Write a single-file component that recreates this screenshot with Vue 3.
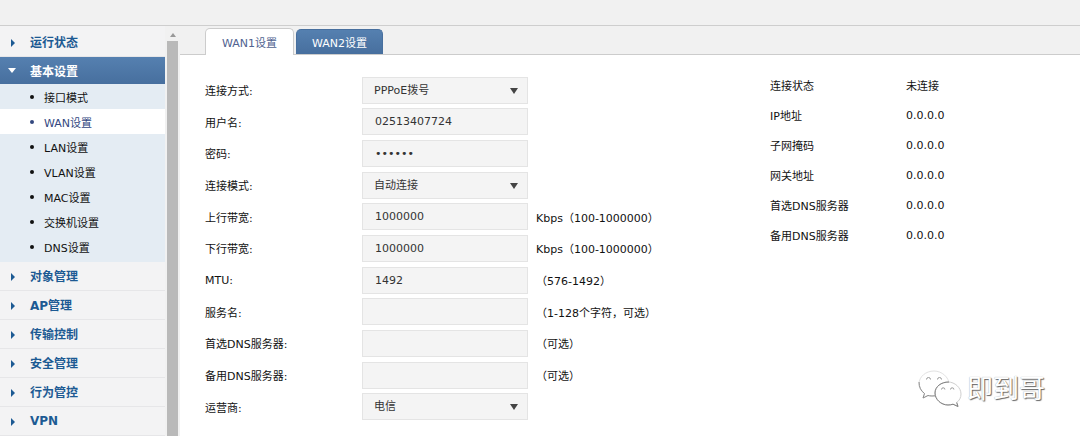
<script setup>
import { ref, reactive } from 'vue'

const menuTop = [{ label: '运行状态' }]
const subItems = ['接口模式', 'WAN设置', 'LAN设置', 'VLAN设置', 'MAC设置', '交换机设置', 'DNS设置']
const menuBottom = ['对象管理', 'AP管理', '传输控制', '安全管理', '行为管控', 'VPN']
const activeSub = ref('WAN设置')

const tabs = ['WAN1设置', 'WAN2设置']
const activeTab = ref('WAN1设置')

const fields = reactive([
  { id: 'conn-type', label: '连接方式:', kind: 'select', value: 'PPPoE拨号', options: ['PPPoE拨号', '静态地址', '动态地址'] },
  { id: 'username', label: '用户名:', kind: 'text', value: '02513407724' },
  { id: 'password', label: '密码:', kind: 'password', value: '123456' },
  { id: 'conn-mode', label: '连接模式:', kind: 'select', value: '自动连接', options: ['自动连接', '手动连接'] },
  { id: 'uplink', label: '上行带宽:', kind: 'text', value: '1000000', hint: 'Kbps（100-1000000）' },
  { id: 'downlink', label: '下行带宽:', kind: 'text', value: '1000000', hint: 'Kbps（100-1000000）' },
  { id: 'mtu', label: 'MTU:', kind: 'text', value: '1492', hint: '（576-1492）' },
  { id: 'service', label: '服务名:', kind: 'text', value: '', hint: '（1-128个字符，可选）' },
  { id: 'dns1', label: '首选DNS服务器:', kind: 'text', value: '', hint: '（可选）' },
  { id: 'dns2', label: '备用DNS服务器:', kind: 'text', value: '', hint: '（可选）' },
  { id: 'isp', label: '运营商:', kind: 'select', value: '电信', options: ['电信', '联通', '移动'] }
])

const status = [
  ['连接状态', '未连接'],
  ['IP地址', '0.0.0.0'],
  ['子网掩码', '0.0.0.0'],
  ['网关地址', '0.0.0.0'],
  ['首选DNS服务器', '0.0.0.0'],
  ['备用DNS服务器', '0.0.0.0']
]
</script>

<template>
  <div class="page">
    <header class="topbar"></header>
    <div class="body">
      <nav class="sidebar">
        <a v-for="m in menuTop" :key="m.label" href="#" class="group">
          <span class="caret"></span>{{ m.label }}
        </a>
        <a href="#" class="group open"><span class="caret down"></span>基本设置</a>
        <ul class="sub">
          <li v-for="s in subItems" :key="s">
            <a href="#" :class="{ current: s === activeSub }" @click.prevent="activeSub = s">
              <span class="dot"></span>{{ s }}
            </a>
          </li>
        </ul>
        <a v-for="m in menuBottom" :key="m" href="#" class="group"><span class="caret"></span>{{ m }}</a>
      </nav>
      <div class="scroll">
        <span class="scroll-up"></span>
        <span class="thumb"></span>
      </div>
      <main class="main">
        <div class="tabs" role="tablist">
          <button
            v-for="t in tabs"
            :key="t"
            type="button"
            role="tab"
            class="tab"
            :class="{ active: t === activeTab }"
            :aria-selected="t === activeTab"
            @click="activeTab = t"
          >{{ t }}</button>
        </div>
        <div class="content">
          <form class="form" @submit.prevent>
            <div v-for="f in fields" :key="f.id" class="row">
              <label :for="f.id">{{ f.label }}</label>
              <div v-if="f.kind === 'select'" class="select">
                <select :id="f.id" v-model="f.value">
                  <option v-for="o in f.options" :key="o">{{ o }}</option>
                </select>
              </div>
              <input v-else :id="f.id" v-model="f.value" :type="f.kind" autocomplete="off" />
              <span v-if="f.hint" class="hint">{{ f.hint }}</span>
            </div>
          </form>
          <dl class="status">
            <template v-for="s in status" :key="s[0]">
              <dt>{{ s[0] }}</dt>
              <dd>{{ s[1] }}</dd>
            </template>
          </dl>
        </div>
      </main>
    </div>
    <div class="watermark">
      <svg width="44" height="38" viewBox="0 0 44 38" aria-hidden="true">
        <g fill="#fff" stroke-linejoin="round">
          <path d="M16 1C8 1 1 6.500 1 14c0 4 2 7 5.500 9.500L5 28l5-2.500c2 .5 4 .7 6 .6C25 26 31 20.500 31 14S24 1 16 1z" stroke="#e2e2e2" />
          <path d="M1 12c0 5 2 9 5.500 11.500L5 28l5-2.500c2 .5 4 .6 7 .3" fill="none" stroke="#8c8c8c" />
          <path d="M30 12c-7 0-13 4.700-13 11S23 35 30 35c2 0 3.500-.3 5-.8l5 2.300-1.300-4C41.500 30.500 43 27.500 43 24c0-6.200-6-12-13-12z" stroke="#cfcfcf" />
          <path d="M31 12c-8 0-14 4.700-14 11S23 35 30 35c2 0 3.500-.3 5-.8l5 2.300-1.300-4" fill="none" stroke="#808080" />
        </g>
        <g fill="none" stroke="#999">
          <path d="M8.500 9.500a2 2 0 0 1 4 0M19.500 9.500a2 2 0 0 1 4 0M23.500 19.500a1.700 1.700 0 0 1 3.400 0M32.500 19.500a1.700 1.700 0 0 1 3.400 0" />
        </g>
      </svg>
      <span>即到哥</span>
    </div>
  </div>
</template>

<style>
body {
  margin: 0;
}
</style>

<style scoped>
.page {
  display: flex;
  flex-direction: column;
  height: 100vh;
  overflow: hidden;
  position: relative;
  background: #fff;
  color: #111;
  font-family: "DejaVu Sans", "Noto Sans CJK SC", sans-serif;
  font-size: 11px;
}
.page * {
  box-sizing: border-box;
}
.topbar {
  flex: none;
  height: 26px;
  background: #f1f1f1;
  border-bottom: 1px solid #cecece;
}
.body {
  display: flex;
  flex: 1;
  min-height: 0;
}
.sidebar {
  flex: none;
  width: 165px;
  padding-top: 2px;
  overflow: hidden;
  background: #f3f3f4;
}
.group {
  display: flex;
  align-items: center;
  height: 29px;
  padding: 0 0 1px 11px;
  border-bottom: 1px solid #e6e6e8;
  color: #1c5a93;
  font-size: 12px;
  font-weight: bold;
  text-decoration: none;
}
.group.open {
  height: 27px;
  padding-left: 8px;
  border: 0;
  background: linear-gradient(#5580b0, #476f9e);
  color: #fff;
}
.caret {
  flex: none;
  width: 4px;
  margin: 2px 15px 0 0;
  border-left: 4px solid #1c5a93;
  border-top: 4px solid transparent;
  border-bottom: 4px solid transparent;
}
.caret.down {
  width: 8px;
  margin: 0 14px 0 0;
  border-left: 4px solid transparent;
  border-right: 4px solid transparent;
  border-top: 5px solid #fff;
  border-bottom: 0;
}
.sub {
  margin: 0;
  padding: 0 0 3px;
  list-style: none;
  background: #e4ecf3;
}
.sub a {
  display: flex;
  align-items: center;
  height: 25px;
  padding-left: 30px;
  color: #111;
  text-decoration: none;
}
.sub a.current {
  background: #fff;
  color: #33487f;
}
.dot {
  width: 4px;
  height: 4px;
  margin-right: 10px;
  border-radius: 50%;
  background: currentColor;
}
.scroll {
  display: flex;
  flex: none;
  flex-direction: column;
  align-items: center;
  width: 15px;
  background: #f1f1f1;
}
.scroll-up {
  margin: 7px 0 4px;
  border-left: 3px solid transparent;
  border-right: 3px solid transparent;
  border-bottom: 4px solid #999;
}
.thumb {
  flex: 1;
  width: 11px;
  background: #b9b9b9;
}
.main {
  flex: 1;
  min-width: 0;
}
.tabs {
  display: flex;
  align-items: flex-end;
  gap: 2px;
  height: 29px;
  padding-left: 25px;
  background: #f1f1f1;
  border-bottom: 1px solid #ccc;
}
.tab {
  height: 25px;
  padding: 0 15px 1px;
  border: 1px solid #476f9e;
  border-bottom: 0;
  border-radius: 5px 5px 0 0;
  background: linear-gradient(#5580b0, #476f9e);
  color: #fff;
  font: inherit;
}
.tab.active {
  height: 27px;
  margin-bottom: -1px;
  padding: 0 16px 1px;
  border-color: #ccc;
  background: #fff;
  color: #50628f;
}
.content {
  display: flex;
  padding: 19px 25px 0;
}
.form {
  display: grid;
  grid-auto-rows: 32px 31px 32px;
  flex: none;
  width: 565px;
}
.row {
  display: flex;
  align-items: center;
}
.row label {
  width: 157px;
}
.row input,
.select {
  width: 166px;
  height: 27px;
}
.row input,
.row select {
  padding: 0 12px;
  border: 1px solid #e4e4e4;
  border-radius: 0;
  background: #f4f4f4;
  color: #333;
  font: inherit;
  outline: 0;
}
.select {
  position: relative;
}
.row select {
  width: 100%;
  height: 100%;
  padding: 0 8px 0 11px;
  appearance: none;
}
.select::after {
  content: "";
  position: absolute;
  top: 11px;
  right: 10px;
  border-left: 4px solid transparent;
  border-right: 4px solid transparent;
  border-top: 6px solid #444;
  pointer-events: none;
}
.hint {
  margin-left: 8px;
}
.status {
  display: grid;
  grid-template-columns: 136px 1fr;
  grid-auto-rows: 30px;
  flex: 1;
  align-items: center;
  align-content: start;
  margin: -4px 0 0;
}
.status dd {
  margin: 0;
}
.watermark {
  display: flex;
  align-items: center;
  gap: 5px;
  position: absolute;
  right: 35px;
  bottom: 28px;
  color: #fff;
  font-size: 26px;
  line-height: 38px;
  text-shadow: 1px 1px 1px #666, 0 0 1px #999;
  pointer-events: none;
}
</style>
